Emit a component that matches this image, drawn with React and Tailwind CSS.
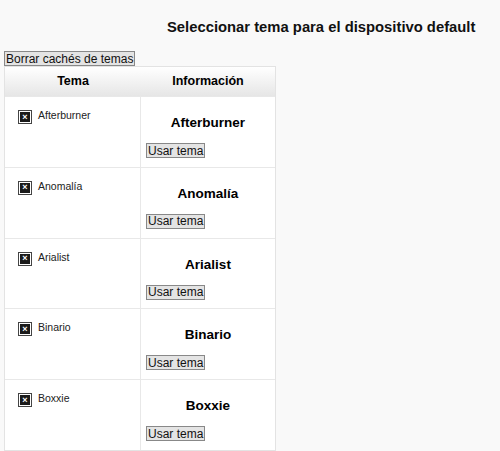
const themes = ['Afterburner', 'Anomalía', 'Arialist', 'Binario', 'Boxxie'];

function BrokenImage() {
    return (
        <span className="inline-flex items-center justify-center w-[14px] h-[14px] border border-[#444] bg-white shrink-0">
            <span className="flex items-center justify-center w-[10px] h-[10px] bg-[#1a1a1a] text-white text-[9px] leading-none font-bold">
                ×
            </span>
        </span>
    );
}

export default function App() {
    return (
        <div className="min-h-[451px] w-[500px] bg-[#f9f9f9] font-['Liberation_Sans',Arial,sans-serif] text-black">
            <h2 className="pt-[18px] pl-[167px] text-[14.8px] font-bold leading-[18px] text-[#111]">
                Seleccionar tema para el dispositivo default
            </h2>

            <div className="pl-[4px] mt-[15px]">
                <button className="block h-[15px] px-[1px] border border-[#888] bg-[#e4e4e4] text-[12px] leading-[12px] text-[#111]">
                    Borrar cachés de temas
                </button>

                <div className="w-[272px] border border-[#e3e3e3] bg-white">
                    {/* header */}
                    <div className="grid grid-cols-[136px_1fr] h-[29px] bg-gradient-to-b from-white to-[#e6e6e6] text-[12.5px] font-bold">
                        <div className="flex items-center justify-center">Tema</div>
                        <div className="flex items-center justify-center">Información</div>
                    </div>

                    {themes.map((t) => (
                        <div key={t} className="grid grid-cols-[136px_1fr] h-[70.8px] border-t border-[#e8e8e8]">
                            <div className="flex items-start gap-[6px] pl-[13px] pt-[13px] border-r border-[#e8e8e8]">
                                <BrokenImage />
                                <span className="text-[10.5px] leading-[12px] -mt-[1px] text-[#222]">{t}</span>
                            </div>
                            <div className="flex flex-col pl-[5px] pt-[18px]">
                                <h3 className="text-center text-[13.5px] font-bold leading-[16px] pr-[5px]">{t}</h3>
                                <button className="self-start mt-[12px] h-[15px] px-[1px] border border-[#888] bg-[#e4e4e4] text-[12px] leading-[12px] text-[#111]">
                                    Usar tema
                                </button>
                            </div>
                        </div>
                    ))}
                </div>
            </div>
        </div>
    );
}
